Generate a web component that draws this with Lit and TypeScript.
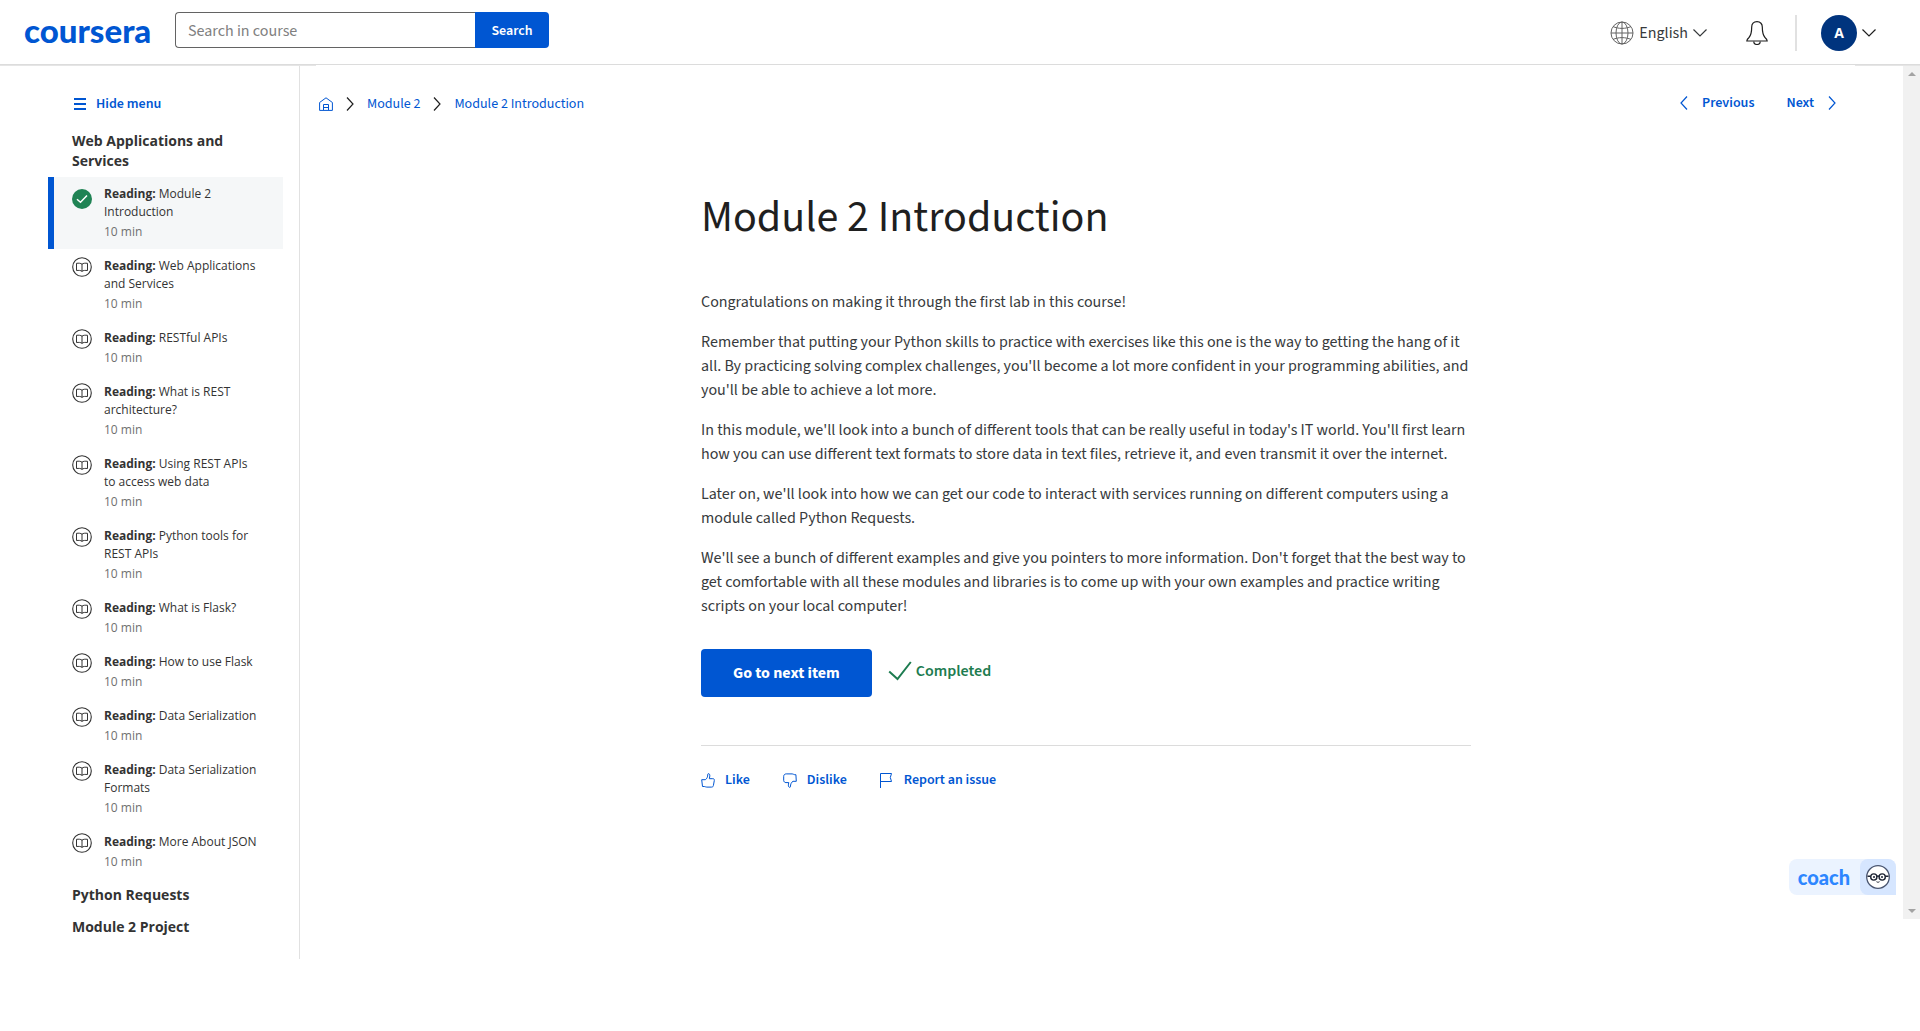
import { LitElement, html, css, svg } from "lit";
import { customElement, property } from "lit/decorators.js";
import { classMap } from "lit/directives/class-map.js";

interface Lesson {
  title: string;
  minutes: number;
  done?: boolean;
}

const lessons: Lesson[] = [
  { title: "Module 2 Introduction", minutes: 10, done: true },
  { title: "Web Applications and Services", minutes: 10 },
  { title: "RESTful APIs", minutes: 10 },
  { title: "What is REST architecture?", minutes: 10 },
  { title: "Using REST APIs to access web data", minutes: 10 },
  { title: "Python tools for REST APIs", minutes: 10 },
  { title: "What is Flask?", minutes: 10 },
  { title: "How to use Flask", minutes: 10 },
  { title: "Data Serialization", minutes: 10 },
  { title: "Data Serialization Formats", minutes: 10 },
  { title: "More About JSON", minutes: 10 },
];

const paragraphs = [
  "Congratulations on making it through the first lab in this course!",
  "Remember that putting your Python skills to practice with exercises like this one is the way to getting the hang of it all. By practicing solving complex challenges, you'll become a lot more confident in your programming abilities, and you'll be able to achieve a lot more.",
  "In this module, we'll look into a bunch of different tools that can be really useful in today's IT world. You'll first learn how you can use different text formats to store data in text files, retrieve it, and even transmit it over the internet.",
  "Later on, we'll look into how we can get our code to interact with services running on different computers using a module called Python Requests.",
  "We'll see a bunch of different examples and give you pointers to more information. Don't forget that the best way to get comfortable with all these modules and libraries is to come up with your own examples and practice writing scripts on your local computer!",
];

const icon = (width: number, height: number, body: unknown) => html`<svg
  width=${width}
  height=${height}
  viewBox="0 0 ${width} ${height}"
  fill="none"
  stroke="currentColor"
  aria-hidden="true"
>${body}</svg>`;

const icons = {
  menu: icon(12, 14, svg`<path d="M0 2h12M0 7h12M0 12h12" stroke-width="2"/>`),
  home: icon(14, 14, svg`<path d="M.6 5.500 7 .8l6.400 4.700v7.900H.6z"/><path d="M4.500 13V7.500h5V13M4.500 10.500h5"/>`),
  right: icon(8, 14, svg`<path d="M1 .5 7 7 1 13.500" stroke-width="1.200"/>`),
  left: icon(8, 14, svg`<path d="M7 .5 1 7l6 6.500" stroke-width="1.200"/>`),
  down: icon(14, 8, svg`<path d="M.5 .5 7 7 13.500 .5" stroke-width="1.200"/>`),
  globe: icon(24, 24, svg`<circle cx="12" cy="12" r="11"/><ellipse cx="12" cy="12" rx="6" ry="11"/><path d="M12 1v22M1 12h22M3 5.500c5 2.500 13 2.500 18 0M3 18.500c5-2.500 13-2.500 18 0"/>`),
  bell: icon(22, 24, svg`<path d="M11 .7C7.500 .7 5.700 3 5.700 6c0 6-.5 8-2.700 10.500C1.500 17.800.8 18.500.8 20h20.400c0-1.500-.7-2.200-2.200-3.500C16.800 14 16.300 12 16.300 6c0-3-1.800-5.300-5.300-5.300z" stroke-width="1.200"/><path d="M7.800 20.500a3.200 3 0 0 0 6.400 0" stroke-width="1.200"/>`),
  book: icon(20, 20, svg`<circle cx="10" cy="10" r="9.300" stroke-width="1.100"/><path d="M10 7.200C8.800 6.100 6.600 6.100 4.500 6.300v7.200c2.100-.2 4.300-.2 5.500.8 1.200-1 3.400-1 5.500-.8V6.300c-2.100-.2-4.300-.2-5.500.9zM10 7v7.500"/>`),
  done: icon(20, 20, svg`<circle cx="10" cy="10" r="10" fill="#1f8354" stroke="none"/><path d="m5 10.200 3.500 3L15 6.500" stroke="#fff" stroke-width="1.500"/>`),
  check: icon(24, 20, svg`<path d="m1.200 10.500 8.300 7.500L22.800 1" stroke-width="2"/>`),
  like: icon(14, 15, svg`<path d="M.7 6.700h3.600c1.700-1 2.400-2.600 2.500-5.500.1-.9 1.900-.8 2 1 .1 1.200-.2 2.400-.5 3.500h3.500c1.300 0 1.700.7 1.500 1.800l-.9 5c-.2 1.100-.8 1.600-1.800 1.600H5.800c-1.200 0-1.600-.6-2.500-.6H1.500z"/>`),
  dislike: icon(14, 15, svg`<path d="M13.300 8.300H10c-1.700 1-2.500 2.800-2.600 5.500-.1.900-1.900.7-2-1-.1-1.200.1-2.200.4-3.200H3C1.700 9.600.9 8.800.7 7.500V3.300C.8 1.800 1.700.9 3.200.9h6c1.200 0 1.600.8 2.500.8h1.200z"/>`),
  flag: icon(14, 15, svg`<path d="M.5 15V.5h11l-1.200 4 1.200 4H.5"/>`),
  coach: icon(24, 24, svg`<circle cx="12" cy="12" r="11.300" fill="#fff" stroke="#4a5671" stroke-width="1.300"/><g stroke="#1c2333" stroke-width="1.400"><circle cx="7.800" cy="12" r="3.100"/><circle cx="16.200" cy="12" r="3.100"/><path d="M1.500 11.300h3.200M19.300 11.300h3.200M10.900 11.500c.6-.5 1.600-.5 2.200 0"/></g><g fill="#1c2333" stroke="none"><circle cx="8" cy="12" r="1"/><circle cx="16" cy="12" r="1"/></g><path d="M10.500 16.700c1 .7 2 .7 3 0" stroke="#1c2333"/>`),
};

const controls = css`
  :host,
  * {
    box-sizing: border-box;
  }
  svg {
    display: block;
    flex: none;
  }
  a {
    color: inherit;
    text-decoration: none;
  }
  button {
    display: flex;
    align-items: center;
    padding: 0;
    border: 0;
    background: none;
    color: inherit;
    font: inherit;
    cursor: pointer;
  }
`;

@customElement("course-header")
export class CourseHeader extends LitElement {
  static styles = [
    controls,
    css`
      :host {
        display: block;
      }
      .bar {
        display: flex;
        align-items: center;
        height: 65px;
        padding: 0 44px 0 24px;
        border-bottom: 1px solid #dcdcdc;
      }
      .edge {
        display: flex;
        justify-content: space-between;
        height: 1px;
      }
      .edge-start {
        width: 316px;
        background: #e5e5e5;
      }
      .edge-end {
        width: 65px;
        background: #e5e5e5;
      }
      .logo {
        width: 127px;
        margin-right: 24px;
        padding-bottom: 4px;
        color: #0056d2;
        font: 900 33px/40px Lato, sans-serif;
      }
      .search {
        display: flex;
        height: 36px;
        margin-bottom: 4px;
      }
      .field {
        width: 300px;
        padding: 2px 12px 0;
        border: 1px solid #636363;
        border-right: 0;
        border-radius: 4px 0 0 4px;
        outline: 0;
        background: #fff;
        color: #1f1f1f;
        font: inherit;
      }
      .field::placeholder {
        color: #808080;
        opacity: 1;
      }
      .submit {
        justify-content: center;
        width: 74px;
        padding-top: 2px;
        border-radius: 0 4px 4px 0;
        background: #0056d2;
        color: #fff;
        font-size: 14px;
        font-weight: 600;
      }
      .tools {
        display: flex;
        align-items: center;
        margin-left: auto;
        padding-top: 2px;
        color: #1f1f1f;
      }
      .language {
        gap: 5px;
        margin-right: 39px;
        color: #373a3c;
      }
      .globe {
        color: #636363;
      }
      .account {
        gap: 5px;
        margin-left: 27px;
        padding-left: 24px;
        border-left: 2px solid #e1e1e1;
      }
      .avatar {
        display: grid;
        place-items: center;
        width: 36px;
        height: 36px;
        border-radius: 50%;
        background: #00347e;
        color: #fff;
        font: 700 14px/20px "Open Sans", sans-serif;
      }
    `,
  ];

  render() {
    return html`
      <header class="bar">
        <a class="logo" href="#home">coursera</a>
        <form class="search" role="search" @submit=${(e: Event) => e.preventDefault()}>
          <input class="field" type="text" placeholder="Search in course" aria-label="Search in course" />
          <button class="submit" type="submit">Search</button>
        </form>
        <div class="tools">
          <button class="language" type="button">
            <span class="globe">${icons.globe}</span>
            <span>English</span>
            ${icons.down}
          </button>
          <button type="button" aria-label="Notifications">${icons.bell}</button>
          <button class="account" type="button" aria-label="Account">
            <span class="avatar">A</span>
            ${icons.down}
          </button>
        </div>
      </header>
      <div class="edge"><span class="edge-start"></span><span class="edge-end"></span></div>
    `;
  }
}

@customElement("course-outline")
export class CourseOutline extends LitElement {
  @property({ attribute: false }) lessons: Lesson[] = [];

  static styles = [
    controls,
    css`
      :host {
        display: block;
        width: 300px;
        flex: none;
        padding: 28px 16px 16px 48px;
        border-right: 1px solid #e1e1e1;
      }
      .toggle {
        gap: 10px;
        height: 20px;
        margin: 0 0 11px 26px;
        color: #0056d2;
        font-size: 14px;
        font-weight: 600;
      }
      .section {
        margin: 0;
        padding: 6px 24px;
        color: #333;
        font: 700 14px/20px "Open Sans", sans-serif;
      }
      .list {
        margin: 0;
        padding: 0;
        list-style: none;
      }
      .item {
        display: flex;
        gap: 12px;
        padding: 8px 24px 8px 18px;
        border-left: 6px solid transparent;
        color: #333;
        font: 12px/18px "Open Sans", sans-serif;
      }
      .current {
        border-color: #0056d2;
        background: #f5f7f8;
      }
      .current .mark {
        padding-top: 4px;
      }
      .text {
        display: grid;
        gap: 2px;
      }
      .time {
        color: #707070;
      }
    `,
  ];

  render() {
    return html`
      <button class="toggle" type="button">${icons.menu}<span>Hide menu</span></button>
      <h2 class="section">Web Applications and Services</h2>
      <ul class="list">
        ${this.lessons.map(
          (lesson) => html`<li>
            <a class=${classMap({ item: true, current: !!lesson.done })} href="#lesson">
              <span class="mark">${lesson.done ? icons.done : icons.book}</span>
              <span class="text">
                <span><b>Reading:</b> ${lesson.title}</span>
                <span class="time">${lesson.minutes} min</span>
              </span>
            </a>
          </li>`
        )}
      </ul>
      <h2 class="section">Python Requests</h2>
      <h2 class="section">Module 2 Project</h2>
    `;
  }
}

@customElement("course-reading")
export class CourseReading extends LitElement {
  @property({ attribute: false }) paragraphs: string[] = [];

  static styles = [
    controls,
    css`
      :host {
        display: flex;
        flex: 1;
        position: relative;
        align-self: flex-start;
        height: calc(100vh - 178px);
        min-height: 760px;
      }
      .page {
        flex: 1;
      }
      .top {
        display: flex;
        justify-content: space-between;
        padding: 26px 67px 0 19px;
        color: #0056d2;
        font-size: 14px;
        line-height: 20px;
      }
      .crumbs,
      .pager,
      .step {
        display: flex;
        align-items: center;
      }
      .crumbs {
        gap: 13px;
        padding-top: 2px;
      }
      .chevron {
        color: #1f1f1f;
      }
      .pager {
        gap: 32px;
        font-weight: 600;
      }
      .step {
        gap: 14px;
      }
      .article {
        max-width: 801px;
        margin: 0 auto;
        padding: 76px 31px 0 0;
        color: #373a3c;
      }
      .title {
        margin: 0 0 44px;
        color: #1f1f1f;
        font-size: 44px;
        font-weight: 400;
        line-height: 56px;
      }
      .copy {
        margin: 0 0 16px;
        line-height: 24px;
      }
      .finish {
        display: flex;
        align-items: center;
        gap: 16px;
        padding: 15px 0 48px;
        border-bottom: 1px solid #dcdcdc;
      }
      .next {
        padding: 12px 32px;
        border-radius: 4px;
        background: #0056d2;
        color: #fff;
        font-weight: 700;
        line-height: 24px;
      }
      .completed {
        display: flex;
        align-items: center;
        gap: 4px;
        padding-bottom: 4px;
        color: #1d7c50;
        font-weight: 600;
      }
      .feedback {
        display: flex;
        gap: 33px;
        padding-top: 24px;
        color: #0056d2;
        font-size: 14px;
        font-weight: 600;
        line-height: 20px;
      }
      .action {
        gap: 10px;
      }
      .coach {
        position: absolute;
        right: 24px;
        bottom: 24px;
        height: 36px;
        border-radius: 8px 8px 0 8px;
        background: #ebf3ff;
        color: #2d86ff;
        font: 900 20px/24px Lato, sans-serif;
      }
      .coach-name {
        padding: 0 10px 1px 9px;
      }
      .coach-face {
        display: grid;
        place-items: center;
        width: 36px;
        height: 36px;
        border-radius: 8px 8px 0 8px;
        background: #d6e6ff;
      }
      .track {
        display: flex;
        flex-direction: column;
        justify-content: space-between;
        align-items: center;
        width: 17px;
        padding: 6px 0;
        background: #f1f1f1;
        color: #a3a3a3;
      }
    `,
  ];

  render() {
    const arrow = (d: string) =>
      html`<svg width="8" height="4" viewBox="0 0 8 4" fill="currentColor" aria-hidden="true"><path d=${d} /></svg>`;
    return html`
      <div class="page">
        <div class="top">
          <nav class="crumbs" aria-label="Breadcrumb">
            <a href="#home" aria-label="Home">${icons.home}</a>
            <span class="chevron">${icons.right}</span>
            <a href="#module">Module 2</a>
            <span class="chevron">${icons.right}</span>
            <a href="#lesson">Module 2 Introduction</a>
          </nav>
          <nav class="pager" aria-label="Lesson navigation">
            <a class="step" href="#previous">${icons.left}<span>Previous</span></a>
            <a class="step" href="#next"><span>Next</span>${icons.right}</a>
          </nav>
        </div>
        <article class="article">
          <h1 class="title">Module 2 Introduction</h1>
          ${this.paragraphs.map((text) => html`<p class="copy">${text}</p>`)}
          <div class="finish">
            <button class="next" type="button">Go to next item</button>
            <span class="completed">${icons.check}<span>Completed</span></span>
          </div>
          <div class="feedback">
            <button class="action" type="button">${icons.like}<span>Like</span></button>
            <button class="action" type="button">${icons.dislike}<span>Dislike</span></button>
            <button class="action" type="button">${icons.flag}<span>Report an issue</span></button>
          </div>
        </article>
      </div>
      <div class="track">${arrow("M4 0 8 4H0z")}${arrow("M0 0h8L4 4z")}</div>
      <button class="coach" type="button">
        <span class="coach-name">coach</span>
        <span class="coach-face">${icons.coach}</span>
      </button>
    `;
  }
}

@customElement("app-root")
export class AppRoot extends LitElement {
  static styles = css`
    :host {
      display: block;
      min-height: 100vh;
      background: #fff;
      color: #1f1f1f;
      font-family: "Source Sans 3", "Noto Sans CJK JP", sans-serif;
      font-size: 16px;
      line-height: 24px;
    }
    .columns {
      display: flex;
      align-items: flex-start;
    }
  `;

  render() {
    return html`
      <course-header></course-header>
      <div class="columns">
        <course-outline .lessons=${lessons}></course-outline>
        <course-reading .paragraphs=${paragraphs}></course-reading>
      </div>
    `;
  }
}
